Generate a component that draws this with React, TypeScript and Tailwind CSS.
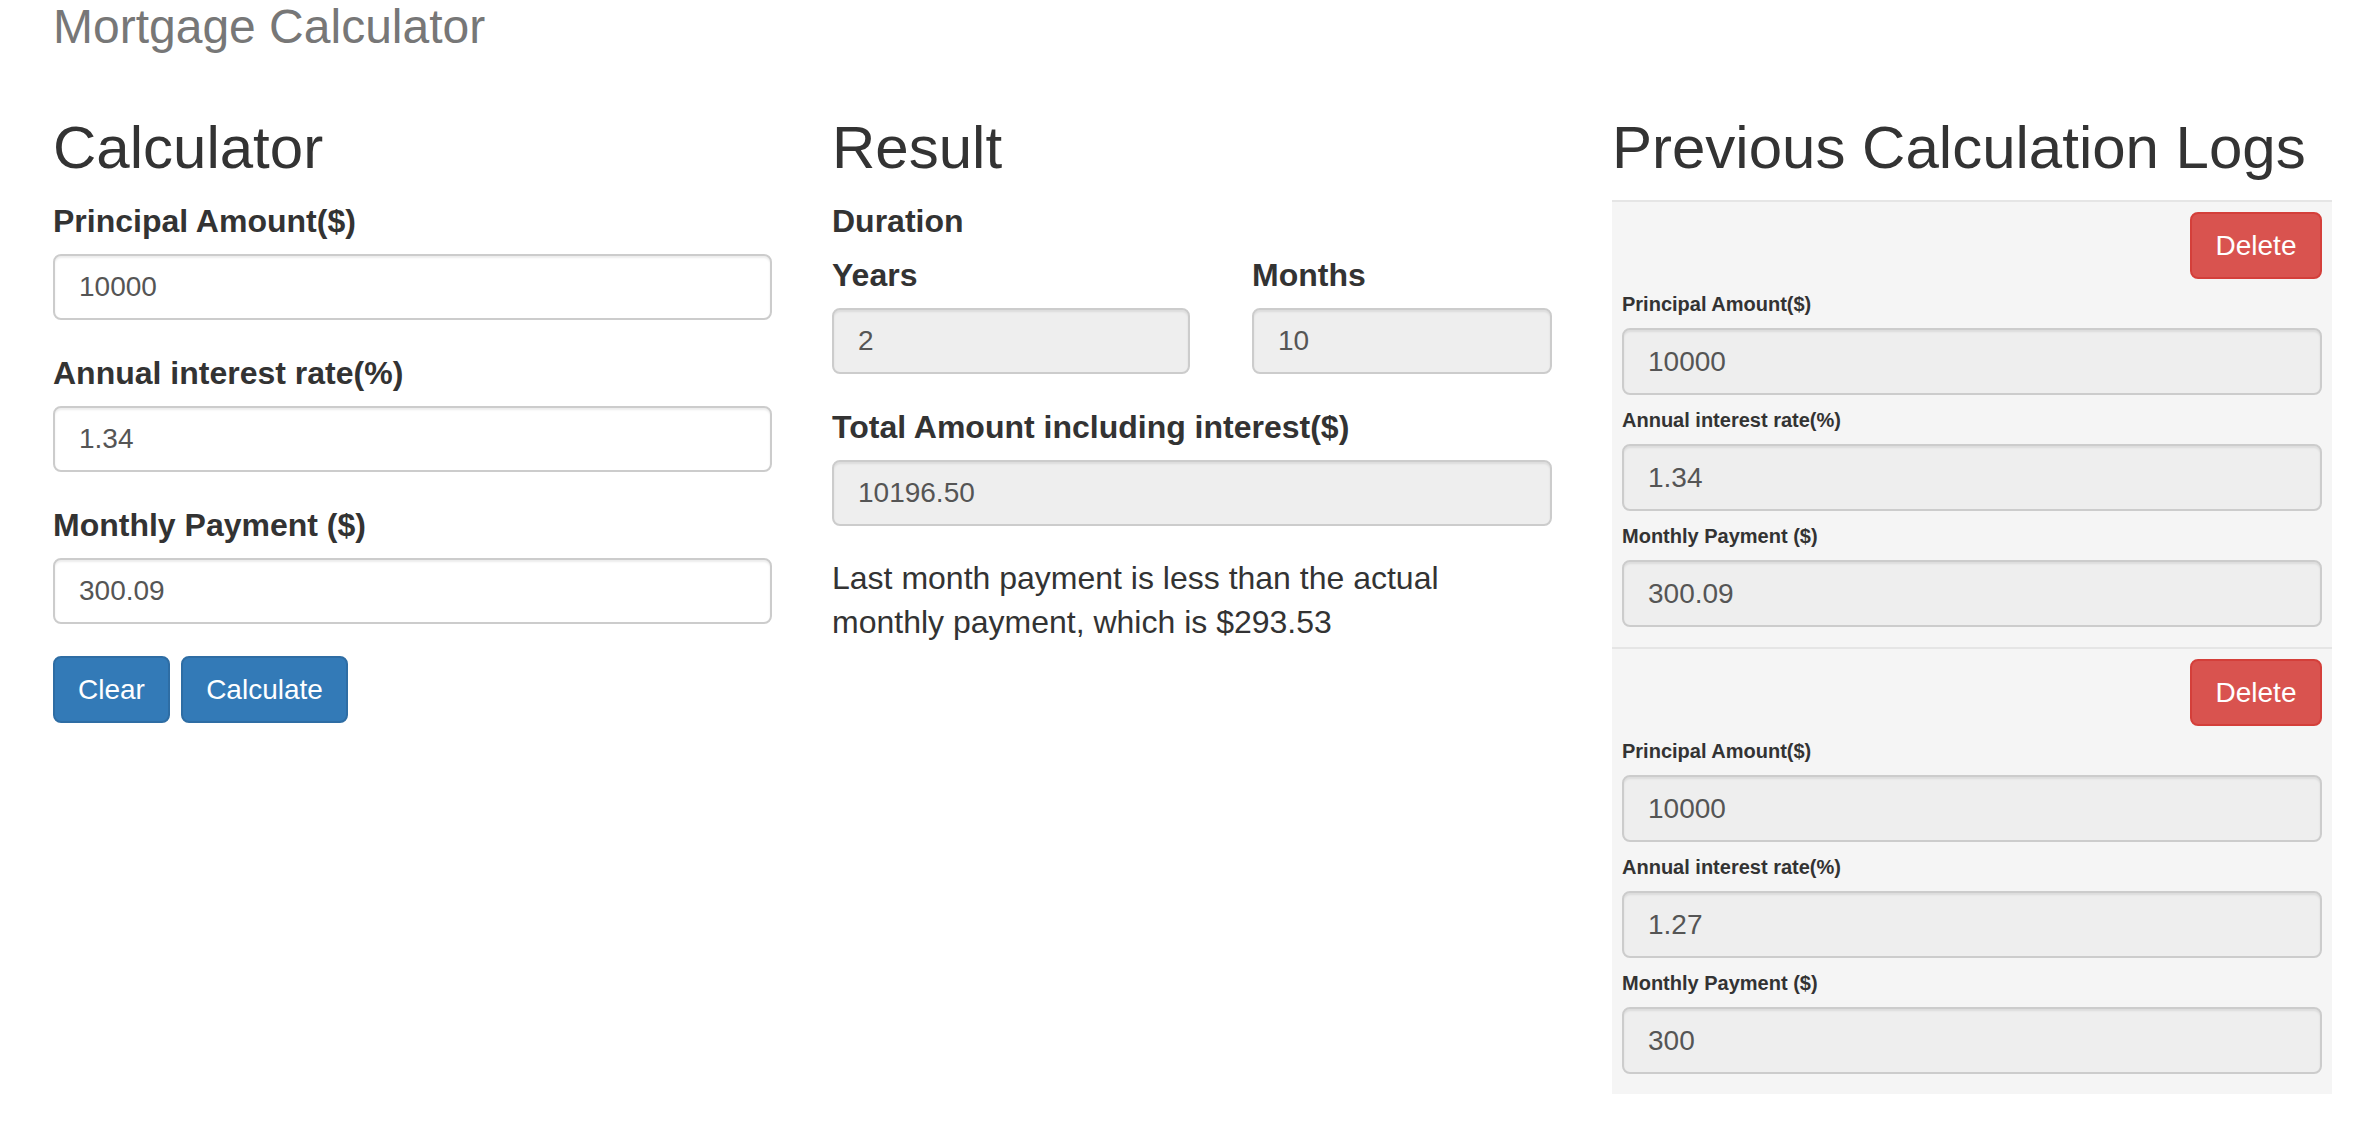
import React from "react";

const inputWhite =
  "block w-full h-[66px] rounded-[8px] border-2 border-[#cccccc] bg-white px-[24px] text-[28px] text-[#555555] shadow-[inset_0_2px_2px_rgba(0,0,0,0.075)] outline-none font-['Liberation_Sans',Arial,sans-serif]";
const inputGray =
  "block w-full h-[66px] rounded-[8px] border-2 border-[#cccccc] bg-[#eeeeee] px-[24px] text-[28px] text-[#555555] shadow-[inset_0_2px_2px_rgba(0,0,0,0.075)] outline-none font-['Liberation_Sans',Arial,sans-serif]";
const inputLog =
  "block w-full h-[67px] rounded-[8px] border-2 border-[#cccccc] bg-[#eeeeee] px-[24px] text-[28px] text-[#555555] shadow-[inset_0_2px_2px_rgba(0,0,0,0.075)] outline-none font-['Liberation_Sans',Arial,sans-serif]";

const labelCls = "block text-[32px] leading-[46px] font-bold text-[#333333]";
const h2Cls = "text-[60px] leading-[66px] font-normal text-[#333333] mb-[17px]";
const logLabel = "block mt-[10px] mb-[9px] text-[20px] leading-[30px] font-bold text-[#333333]";

type Log = { principal: string; rate: string; monthly: string };

const logs: Log[] = [
  { principal: "10000", rate: "1.34", monthly: "300.09" },
  { principal: "10000", rate: "1.27", monthly: "300" },
];

function LogItem({ log }: { log: Log }) {
  return (
    <div className="border-t-2 border-[#e5e5e5] px-[10px] pt-[10px] pb-[20px]">
      <div className="flex justify-end">
        <button className="h-[67px] w-[132px] rounded-[8px] border-2 border-[#d43f3a] bg-[#d9534f] text-[28px] text-white">
          Delete
        </button>
      </div>
      <label className={logLabel}>Principal Amount($)</label>
      <input readOnly value={log.principal} className={inputLog} />
      <label className={logLabel}>Annual interest rate(%)</label>
      <input readOnly value={log.rate} className={inputLog} />
      <label className={logLabel}>Monthly Payment ($)</label>
      <input readOnly value={log.monthly} className={inputLog} />
    </div>
  );
}

export default function App() {
  return (
    <div className="min-h-[1130px] w-[2360px] bg-white font-['Liberation_Sans',Arial,Helvetica,sans-serif] text-[#333333]">
      <div className="pl-[53px] pt-[3px] text-[48px] leading-[48px] text-[#777777]">
        Mortgage Calculator
      </div>
      <div className="grid grid-cols-[719px_720px_720px] gap-x-[60px] pl-[53px] pt-[64px]">
        {/* Calculator */}
        <div>
          <h2 className={h2Cls}>Calculator</h2>
          <div className="mb-[30px]">
            <label className={labelCls + " mb-[10px]"}>Principal Amount($)</label>
            <input defaultValue="10000" className={inputWhite} />
          </div>
          <div className="mb-[30px]">
            <label className={labelCls + " mb-[10px]"}>Annual interest rate(%)</label>
            <input defaultValue="1.34" className={inputWhite} />
          </div>
          <div className="mb-[32px]">
            <label className={labelCls + " mb-[10px]"}>Monthly Payment ($)</label>
            <input defaultValue="300.09" className={inputWhite} />
          </div>
          <div className="flex gap-[11px]">
            <button className="h-[67px] w-[117px] rounded-[8px] border-2 border-[#2e6da4] bg-[#337ab7] text-[28px] text-white">
              Clear
            </button>
            <button className="h-[67px] w-[167px] rounded-[8px] border-2 border-[#2e6da4] bg-[#337ab7] text-[28px] text-white">
              Calculate
            </button>
          </div>
        </div>

        {/* Result */}
        <div>
          <h2 className={h2Cls}>Result</h2>
          <label className={labelCls + " mb-[8px]"}>Duration</label>
          <div className="mb-[30px] flex justify-between">
            <div className="w-[358px]">
              <label className={labelCls + " mb-[10px]"}>Years</label>
              <input readOnly value="2" className={inputGray} />
            </div>
            <div className="w-[300px]">
              <label className={labelCls + " mb-[10px]"}>Months</label>
              <input readOnly value="10" className={inputGray} />
            </div>
          </div>
          <div className="mb-[30px]">
            <label className={labelCls + " mb-[10px]"}>Total Amount including interest($)</label>
            <input readOnly value="10196.50" className={inputGray} />
          </div>
          <p className="text-[32px] leading-[44px] text-[#333333]">
            Last month payment is less than the actual monthly payment, which is $293.53
          </p>
        </div>

        {/* Logs */}
        <div>
          <h2 className="mb-[19px] text-[60px] leading-[66px] font-normal text-[#333333]">
            Previous Calculation Logs
          </h2>
          <div className="bg-[#f5f5f5]">
            {logs.map((l, i) => (
              <LogItem key={i} log={l} />
            ))}
          </div>
        </div>
      </div>
    </div>
  );
}
